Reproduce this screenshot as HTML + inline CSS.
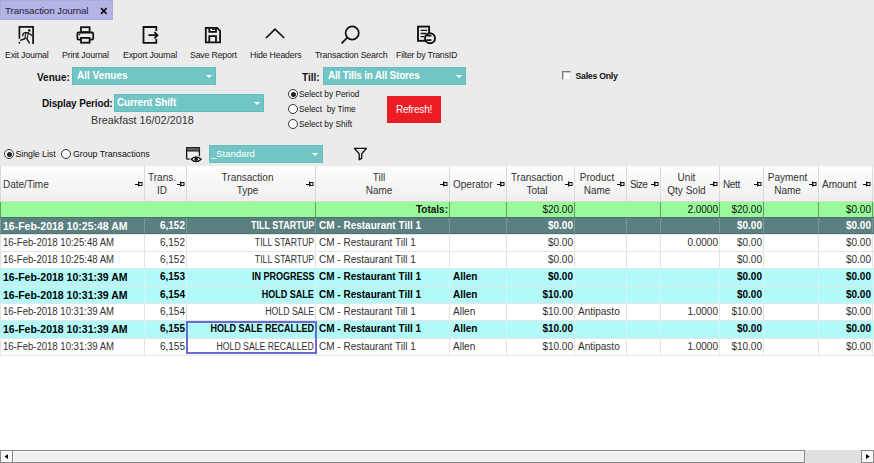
<!DOCTYPE html>
<html><head><meta charset="utf-8">
<style>
*{margin:0;padding:0;box-sizing:border-box}
html,body{width:874px;height:463px;overflow:hidden;background:#ebebeb;font-family:"Liberation Sans",sans-serif;color:#222;position:relative}
.a{position:absolute;white-space:nowrap}
.tab{left:0;top:0;width:113px;height:20px;background:#b4b4e6;box-shadow:inset 0 0 0 1px #acacdc}
.tabt{left:5px;top:4.6px;font-size:9.8px;letter-spacing:-0.12px;color:#1e1e3a}
.tbl{font-size:8.8px;letter-spacing:-0.2px;color:#1a1a1a;top:49.5px}
.lbl{font-size:10px;font-weight:bold;color:#111}
.dd{background:#72c5c5;color:#fff;font-size:10px;font-weight:bold;box-shadow:inset 0 0 0 1px #66bcbc}
.dd .t{position:absolute;left:5px;top:3px}
.dd .arr{position:absolute;right:4px;top:8px;width:0;height:0;border-left:3px solid transparent;border-right:3px solid transparent;border-top:3px solid #fff}
.radio{width:10px;height:10px;border:1px solid #333;border-radius:50%;background:#fff}
.radio.on::after{content:"";position:absolute;left:1.5px;top:1.5px;width:5px;height:5px;border-radius:50%;background:#222}
.rl{font-size:8.3px;color:#111}
/* grid */
.grid{left:0;top:166px;width:874px;height:284px;background:#fff}
.hdr{position:absolute;top:0;height:36px;background:linear-gradient(#fdfdfd,#efefef);border-right:1px solid #dadada;border-bottom:1px solid #d6d6d6;font-size:10px;color:#333}
.hc{position:absolute;left:0;right:7px;top:5px;text-align:center;line-height:13px}
.hl{position:absolute;left:3px;top:12px;line-height:13px}
.pin{position:absolute;right:1px;top:15px}
.row{position:absolute;left:0;width:874px;border-bottom:1px solid #e6e6e6;font-size:10px;color:#303030}
.cell{position:absolute;top:0;bottom:0;line-height:16px;padding:0 1px 0 3px;border-right:1px solid #e2e2e2;overflow:hidden;white-space:nowrap}
.r{text-align:right}
.row .cell:first-child{box-shadow:inset 1px 0 #e2e2e2}
.dark .cell:first-child{box-shadow:inset 1px 0 #7a9a9a}
.cyan .cell:first-child{box-shadow:inset 1px 0 #c8ecec}
.tot .cell:first-child{box-shadow:inset 1px 0 #6c9c6c}
.hdr:first-child{box-shadow:inset 1px 0 #d6d6d6}
.b{font-weight:bold}
.dark{background:#5b8080;color:#fff;box-shadow:inset 0 1px #4e7070,inset 0 -1px #507272}
.dark .cell{top:1px;bottom:1px}
.dark .cell{border-right-color:#7a9a9a}
.cyan{background:#b2fafa;color:#000}
.cyan .cell{border-right-color:#d6f4f4}
.tot{background:#98fa98;color:#111;border-bottom:none}
.tot .cell{border-right-color:#6c9c6c}
.dn{display:inline-block;transform:scaleX(0.955);transform-origin:0 50%}.db{font-size:10.5px}.un{display:inline-block;transform:scaleX(0.87);transform-origin:100% 50%}.ub{display:inline-block;transform:scaleX(0.9);transform-origin:100% 50%}
.sel{position:absolute;left:186px;top:155px;width:131px;height:33px;border:2px solid #6a6ad0}
</style></head><body>
<div class="a tab"></div>
<div class="a tabt">Transaction Journal</div>
<svg class="a" style="left:100px;top:7px" width="8" height="8"><path d="M1 1.2L6.6 6.8M6.6 1.2L1 6.8" stroke="#111" stroke-width="1.7"/></svg>

<svg class="a" style="left:0;top:0" width="874" height="170" viewBox="0 0 874 170">
<g fill="none" stroke="#111" stroke-width="1.8" stroke-linecap="butt" stroke-linejoin="miter">
<!-- exit -->
<path d="M19.4 38.7V26.9H33.1V44" stroke-width="1.7"/>
<circle cx="19.4" cy="42.7" r="0.9" fill="#111" stroke="none"/>
<circle cx="29.3" cy="30.5" r="1.3" fill="#111" stroke="none"/>
<path d="M22.5 36.3L23.4 33.4Q24.2 32.6 25.8 32.6L28.3 32.9L32.4 35.7" stroke-width="1.3"/>
<path d="M25.9 33L24.8 38.3H27.1L28.3 33Z" stroke-width="1.1" fill="#f4f4f4"/>
<path d="M24.9 38.7L20.2 40.4" stroke-width="1.5"/>
<path d="M26.6 38.3L29.6 43.5" stroke-width="1.4"/>
<!-- print -->
<rect x="81" y="27.2" width="8.6" height="5"/>
<rect x="77.4" y="32.5" width="15.8" height="7.2" rx="1.2"/>
<rect x="81" y="37.9" width="8.6" height="4.8" fill="#ebebeb"/>
<circle cx="79.6" cy="34.5" r="0.7" fill="#111" stroke="none"/>
<!-- export -->
<path d="M156.3 31V27H143.5V42.9H156.3V39.1"/>
<path d="M148.5 35.2H157.2M154.4 32.1L157.5 35.2L154.4 38.3"/>
<!-- save -->
<path d="M205.8 27.9H217.2L220.1 30.8V42.3H205.8Z"/>
<path d="M209.3 27.9V31.8H216V27.9M209.3 42.3V36.2H216V42.3"/>
<rect x="212.2" y="28.4" width="2.6" height="1.6" fill="#111" stroke="none"/>
<!-- chevron -->
<path d="M266 38L275 29.2L284.2 38" stroke-width="1.7"/>
<!-- search -->
<circle cx="352.2" cy="33" r="6.6" stroke-width="1.7"/>
<path d="M347.3 37.6L341.6 43.3" stroke-width="1.8"/>
<!-- filter by transid -->
<rect x="418" y="26.6" width="11.1" height="14.2" stroke-width="1.9"/>
<path d="M420.6 30.4H427.2M420.6 33.5H426.2M420.6 36.6H424.2" stroke-width="1.3"/>
<circle cx="430" cy="38.3" r="5" fill="#ebebeb" stroke-width="1.9"/>
<path d="M426.4 35.6H431.4M426.4 40.1H431.4" stroke-width="1.8"/>
<!-- window eye -->
<rect x="186.6" y="147.6" width="12.8" height="11.6" rx="1" stroke-width="1.3"/>
<rect x="186.6" y="147.6" width="12.8" height="3.3" fill="#666" stroke="#222" stroke-width="1.2"/>
<path d="M190.6 159.3Q196.2 153.6 201.8 159.3Q196.2 165 190.6 159.3Z" fill="#ebebeb" stroke="#ebebeb" stroke-width="2.2"/>
<path d="M191.2 159.3Q196.2 154.6 201.2 159.3Q196.2 164 191.2 159.3Z" fill="#fff" stroke="#111" stroke-width="1.3"/>
<circle cx="196.2" cy="159.3" r="1.7" fill="#111" stroke="none"/>
<!-- funnel -->
<path d="M354.4 148.3H366.5L361.7 153.9V158.3L359.2 159.7V153.9Z" stroke-width="1.35" stroke-linejoin="round"/>
</g></svg>
<!-- toolbar labels -->
<div class="a tbl" style="left:5px">Exit Journal</div>
<div class="a tbl" style="left:62px">Print Journal</div>
<div class="a tbl" style="left:123px">Export Journal</div>
<div class="a tbl" style="left:190px">Save Report</div>
<div class="a tbl" style="left:250px">Hide Headers</div>
<div class="a tbl" style="left:315px">Transaction Search</div>
<div class="a tbl" style="left:396px">Filter by TransID</div>

<!-- filters -->
<div class="a lbl" style="left:37px;top:71.5px">Venue:</div>
<div class="a dd" style="left:72px;top:67px;width:144px;height:18px"><span class="t">All Venues</span><span class="arr"></span></div>
<div class="a lbl" style="left:42px;top:97.5px;letter-spacing:-0.15px">Display Period:</div>
<div class="a dd" style="left:114px;top:94px;width:150px;height:18px"><span class="t" style="left:3px;letter-spacing:-0.15px">Current Shift</span><span class="arr"></span></div>
<div class="a" style="left:91px;top:114px;font-size:10.8px;color:#333">Breakfast 16/02/2018</div>

<div class="a lbl" style="left:302px;top:71.5px">Till:</div>
<div class="a dd" style="left:323px;top:67px;width:143px;height:18px"><span class="t" style="letter-spacing:-0.2px">All Tills in All Stores</span><span class="arr"></span></div>

<div class="a radio on" style="left:288px;top:89px"></div><div class="a rl" style="left:299px;top:89px">Select by Period</div>
<div class="a radio" style="left:288px;top:104px"></div><div class="a rl" style="left:299px;top:104px">Select &nbsp;by Time</div>
<div class="a radio" style="left:288px;top:119px"></div><div class="a rl" style="left:299px;top:119px">Select by Shift</div>

<div class="a" style="left:387px;top:96px;width:54px;height:27px;background:#ed1c24;color:#fff;font-size:10px;letter-spacing:-0.2px;text-align:center;line-height:27px">Refresh!</div>

<div class="a" style="left:562px;top:71px;width:9px;height:9px;border:1px solid #e4e4e4;border-top-color:#7a7a7a;border-left-color:#7a7a7a;background:#fff;box-shadow:inset 1px 1px #c8c8c8"></div>
<div class="a" style="left:575.5px;top:71.3px;font-size:8.8px;letter-spacing:-0.3px;font-weight:bold;color:#111">Sales Only</div>

<div class="a radio on" style="left:4px;top:149px"></div><div class="a rl" style="left:15.5px;top:148.5px;font-size:8.8px;letter-spacing:-0.05px">Single List</div>
<div class="a radio" style="left:61px;top:149px"></div><div class="a rl" style="left:73px;top:148.5px;font-size:8.8px">Group Transactions</div>

<div class="a dd" style="left:209px;top:145px;width:114px;height:18px;font-weight:normal;font-size:9.5px"><span class="t" style="top:3px;left:2px">_Standard</span><span class="arr" style="right:5px;top:8px"></span></div>

<!-- grid -->
<div class="a grid"><div class="hdr" style="left:0px;width:145px"><div class="hl">Date/Time</div><svg class="pin" width="8" height="6" viewBox="0 0 8 6"><path d="M0 3.5H3.5M3.5 0.5V5.5" stroke="#111" stroke-width="1" fill="none"/><rect x="4" y="1.5" width="3" height="3" fill="none" stroke="#111" stroke-width="1"/></svg></div>
<div class="hdr" style="left:145px;width:42px"><div class="hc">Trans.<br>ID</div><svg class="pin" width="8" height="6" viewBox="0 0 8 6"><path d="M0 3.5H3.5M3.5 0.5V5.5" stroke="#111" stroke-width="1" fill="none"/><rect x="4" y="1.5" width="3" height="3" fill="none" stroke="#111" stroke-width="1"/></svg></div>
<div class="hdr" style="left:187px;width:129px"><div class="hc">Transaction<br>Type</div><svg class="pin" width="8" height="6" viewBox="0 0 8 6"><path d="M0 3.5H3.5M3.5 0.5V5.5" stroke="#111" stroke-width="1" fill="none"/><rect x="4" y="1.5" width="3" height="3" fill="none" stroke="#111" stroke-width="1"/></svg></div>
<div class="hdr" style="left:316px;width:134px"><div class="hc">Till<br>Name</div><svg class="pin" width="8" height="6" viewBox="0 0 8 6"><path d="M0 3.5H3.5M3.5 0.5V5.5" stroke="#111" stroke-width="1" fill="none"/><rect x="4" y="1.5" width="3" height="3" fill="none" stroke="#111" stroke-width="1"/></svg></div>
<div class="hdr" style="left:450px;width:57px"><div class="hl">Operator</div><svg class="pin" width="8" height="6" viewBox="0 0 8 6"><path d="M0 3.5H3.5M3.5 0.5V5.5" stroke="#111" stroke-width="1" fill="none"/><rect x="4" y="1.5" width="3" height="3" fill="none" stroke="#111" stroke-width="1"/></svg></div>
<div class="hdr" style="left:507px;width:68px"><div class="hc">Transaction<br>Total</div><svg class="pin" width="8" height="6" viewBox="0 0 8 6"><path d="M0 3.5H3.5M3.5 0.5V5.5" stroke="#111" stroke-width="1" fill="none"/><rect x="4" y="1.5" width="3" height="3" fill="none" stroke="#111" stroke-width="1"/></svg></div>
<div class="hdr" style="left:575px;width:52px"><div class="hc">Product<br>Name</div><svg class="pin" width="8" height="6" viewBox="0 0 8 6"><path d="M0 3.5H3.5M3.5 0.5V5.5" stroke="#111" stroke-width="1" fill="none"/><rect x="4" y="1.5" width="3" height="3" fill="none" stroke="#111" stroke-width="1"/></svg></div>
<div class="hdr" style="left:627px;width:34px"><div class="hl"><span style="letter-spacing:-0.55px">Size</span></div><svg class="pin" width="8" height="6" viewBox="0 0 8 6"><path d="M0 3.5H3.5M3.5 0.5V5.5" stroke="#111" stroke-width="1" fill="none"/><rect x="4" y="1.5" width="3" height="3" fill="none" stroke="#111" stroke-width="1"/></svg></div>
<div class="hdr" style="left:661px;width:59px"><div class="hc">Unit<br>Qty Sold</div><svg class="pin" width="8" height="6" viewBox="0 0 8 6"><path d="M0 3.5H3.5M3.5 0.5V5.5" stroke="#111" stroke-width="1" fill="none"/><rect x="4" y="1.5" width="3" height="3" fill="none" stroke="#111" stroke-width="1"/></svg></div>
<div class="hdr" style="left:720px;width:44px"><div class="hl"><span style="letter-spacing:-0.35px">Nett</span></div><svg class="pin" width="8" height="6" viewBox="0 0 8 6"><path d="M0 3.5H3.5M3.5 0.5V5.5" stroke="#111" stroke-width="1" fill="none"/><rect x="4" y="1.5" width="3" height="3" fill="none" stroke="#111" stroke-width="1"/></svg></div>
<div class="hdr" style="left:764px;width:55px"><div class="hc">Payment<br>Name</div><svg class="pin" width="8" height="6" viewBox="0 0 8 6"><path d="M0 3.5H3.5M3.5 0.5V5.5" stroke="#111" stroke-width="1" fill="none"/><rect x="4" y="1.5" width="3" height="3" fill="none" stroke="#111" stroke-width="1"/></svg></div>
<div class="hdr" style="left:819px;width:54px"><div class="hl">Amount</div><svg class="pin" width="8" height="6" viewBox="0 0 8 6"><path d="M0 3.5H3.5M3.5 0.5V5.5" stroke="#111" stroke-width="1" fill="none"/><rect x="4" y="1.5" width="3" height="3" fill="none" stroke="#111" stroke-width="1"/></svg></div>
<div class="hdr" style="left:873px;width:10px;border-right:none"></div>
<div class="row tot" style="top:36px;height:15px"><div class="cell r" style="left:0px;width:316px"></div><div class="cell r b" style="left:316px;width:134px">Totals:</div><div class="cell r" style="left:450px;width:57px"></div><div class="cell r" style="left:507px;width:68px">$20.00</div><div class="cell r" style="left:575px;width:86px"></div><div class="cell r" style="left:661px;width:59px">2.0000</div><div class="cell r" style="left:720px;width:44px">$20.00</div><div class="cell r" style="left:764px;width:55px"></div><div class="cell r" style="left:819px;width:54px">$0.00</div></div>
<div class="row dark b" style="top:51px;height:18px"><div class="cell" style="left:0px;width:145px"><span class="db">16-Feb-2018 10:25:48 AM</span></div><div class="cell r" style="left:145px;width:42px">6,152</div><div class="cell r" style="left:187px;width:129px"><span class="ub">TILL STARTUP</span></div><div class="cell" style="left:316px;width:134px">CM - Restaurant Till 1</div><div class="cell" style="left:450px;width:57px"></div><div class="cell r" style="left:507px;width:68px">$0.00</div><div class="cell" style="left:575px;width:52px"></div><div class="cell" style="left:627px;width:34px"></div><div class="cell r" style="left:661px;width:59px"></div><div class="cell r" style="left:720px;width:44px">$0.00</div><div class="cell" style="left:764px;width:55px"></div><div class="cell r" style="left:819px;width:54px">$0.00</div></div>
<div class="row " style="top:69px;height:17px"><div class="cell" style="left:0px;width:145px"><span class="dn">16-Feb-2018 10:25:48 AM</span></div><div class="cell r" style="left:145px;width:42px">6,152</div><div class="cell r" style="left:187px;width:129px"><span class="un">TILL STARTUP</span></div><div class="cell" style="left:316px;width:134px">CM - Restaurant Till 1</div><div class="cell" style="left:450px;width:57px"></div><div class="cell r" style="left:507px;width:68px">$0.00</div><div class="cell" style="left:575px;width:52px"></div><div class="cell" style="left:627px;width:34px"></div><div class="cell r" style="left:661px;width:59px">0.0000</div><div class="cell r" style="left:720px;width:44px">$0.00</div><div class="cell" style="left:764px;width:55px"></div><div class="cell r" style="left:819px;width:54px">$0.00</div></div>
<div class="row " style="top:86px;height:17px"><div class="cell" style="left:0px;width:145px"><span class="dn">16-Feb-2018 10:25:48 AM</span></div><div class="cell r" style="left:145px;width:42px">6,152</div><div class="cell r" style="left:187px;width:129px"><span class="un">TILL STARTUP</span></div><div class="cell" style="left:316px;width:134px">CM - Restaurant Till 1</div><div class="cell" style="left:450px;width:57px"></div><div class="cell r" style="left:507px;width:68px">$0.00</div><div class="cell" style="left:575px;width:52px"></div><div class="cell" style="left:627px;width:34px"></div><div class="cell r" style="left:661px;width:59px"></div><div class="cell r" style="left:720px;width:44px">$0.00</div><div class="cell" style="left:764px;width:55px"></div><div class="cell r" style="left:819px;width:54px">$0.00</div></div>
<div class="row cyan b" style="top:103px;height:18px"><div class="cell" style="left:0px;width:145px"><span class="db">16-Feb-2018 10:31:39 AM</span></div><div class="cell r" style="left:145px;width:42px">6,153</div><div class="cell r" style="left:187px;width:129px"><span class="ub">IN PROGRESS</span></div><div class="cell" style="left:316px;width:134px">CM - Restaurant Till 1</div><div class="cell" style="left:450px;width:57px">Allen</div><div class="cell r" style="left:507px;width:68px">$0.00</div><div class="cell" style="left:575px;width:52px"></div><div class="cell" style="left:627px;width:34px"></div><div class="cell r" style="left:661px;width:59px"></div><div class="cell r" style="left:720px;width:44px">$0.00</div><div class="cell" style="left:764px;width:55px"></div><div class="cell r" style="left:819px;width:54px">$0.00</div></div>
<div class="row cyan b" style="top:121px;height:17px"><div class="cell" style="left:0px;width:145px"><span class="db">16-Feb-2018 10:31:39 AM</span></div><div class="cell r" style="left:145px;width:42px">6,154</div><div class="cell r" style="left:187px;width:129px"><span class="ub">HOLD SALE</span></div><div class="cell" style="left:316px;width:134px">CM - Restaurant Till 1</div><div class="cell" style="left:450px;width:57px">Allen</div><div class="cell r" style="left:507px;width:68px">$10.00</div><div class="cell" style="left:575px;width:52px"></div><div class="cell" style="left:627px;width:34px"></div><div class="cell r" style="left:661px;width:59px"></div><div class="cell r" style="left:720px;width:44px">$0.00</div><div class="cell" style="left:764px;width:55px"></div><div class="cell r" style="left:819px;width:54px">$0.00</div></div>
<div class="row " style="top:138px;height:17px"><div class="cell" style="left:0px;width:145px"><span class="dn">16-Feb-2018 10:31:39 AM</span></div><div class="cell r" style="left:145px;width:42px">6,154</div><div class="cell r" style="left:187px;width:129px"><span class="un">HOLD SALE</span></div><div class="cell" style="left:316px;width:134px">CM - Restaurant Till 1</div><div class="cell" style="left:450px;width:57px">Allen</div><div class="cell r" style="left:507px;width:68px">$10.00</div><div class="cell" style="left:575px;width:52px">Antipasto</div><div class="cell" style="left:627px;width:34px"></div><div class="cell r" style="left:661px;width:59px">1.0000</div><div class="cell r" style="left:720px;width:44px">$10.00</div><div class="cell" style="left:764px;width:55px"></div><div class="cell r" style="left:819px;width:54px">$0.00</div></div>
<div class="row cyan b" style="top:155px;height:18px"><div class="cell" style="left:0px;width:145px"><span class="db">16-Feb-2018 10:31:39 AM</span></div><div class="cell r" style="left:145px;width:42px">6,155</div><div class="cell r" style="left:187px;width:129px"><span class="ub">HOLD SALE RECALLED</span></div><div class="cell" style="left:316px;width:134px">CM - Restaurant Till 1</div><div class="cell" style="left:450px;width:57px">Allen</div><div class="cell r" style="left:507px;width:68px">$10.00</div><div class="cell" style="left:575px;width:52px"></div><div class="cell" style="left:627px;width:34px"></div><div class="cell r" style="left:661px;width:59px"></div><div class="cell r" style="left:720px;width:44px">$0.00</div><div class="cell" style="left:764px;width:55px"></div><div class="cell r" style="left:819px;width:54px">$0.00</div></div>
<div class="row " style="top:173px;height:17px"><div class="cell" style="left:0px;width:145px"><span class="dn">16-Feb-2018 10:31:39 AM</span></div><div class="cell r" style="left:145px;width:42px">6,155</div><div class="cell r" style="left:187px;width:129px"><span class="un">HOLD SALE RECALLED</span></div><div class="cell" style="left:316px;width:134px">CM - Restaurant Till 1</div><div class="cell" style="left:450px;width:57px">Allen</div><div class="cell r" style="left:507px;width:68px">$10.00</div><div class="cell" style="left:575px;width:52px">Antipasto</div><div class="cell" style="left:627px;width:34px"></div><div class="cell r" style="left:661px;width:59px">1.0000</div><div class="cell r" style="left:720px;width:44px">$10.00</div><div class="cell" style="left:764px;width:55px"></div><div class="cell r" style="left:819px;width:54px">$0.00</div></div>
<div class="sel"></div></div><!--/grid-->

<!-- scrollbar -->
<div class="a" style="left:0;top:450px;width:874px;height:13px;background:#e0e0e0"></div>
<div class="a" style="left:0;top:450px;width:13px;height:13px;background:#f7f7f7;border:1px solid #888"></div>
<div class="a" style="left:12px;top:450px;width:793px;height:13px;background:#f0f0f0;border:1px solid #888;box-shadow:inset 1px 1px #fff"></div>
<div class="a" style="left:861px;top:450px;width:13px;height:13px;background:#f7f7f7;border:1px solid #888"></div>
<svg class="a" style="left:0;top:450px" width="874" height="13"><path d="M4.5 6.6L8 4.2V9.1Z" fill="#000"/><path d="M869.8 6.5L866 4V9Z" fill="#000"/></svg>
</body></html>
